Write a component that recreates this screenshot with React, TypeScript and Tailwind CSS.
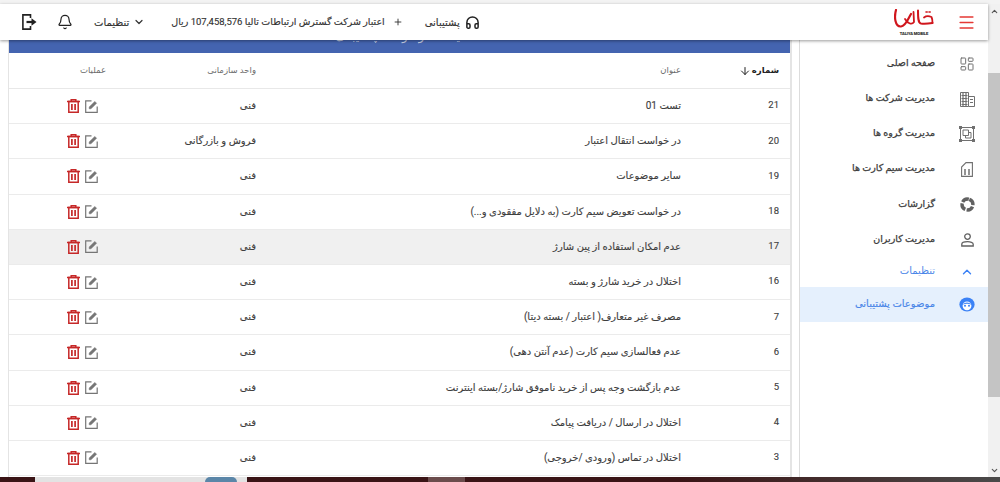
import React from "react";
import { ArrowDown, ChevronDown, ChevronUp, Plus, Bell, Headphones, Menu, LayoutDashboard } from "lucide-react";

const rows: [string, string, string, boolean?][] = [
  ["21", "تست 01", "فنی"],
  ["20", "در خواست انتقال اعتبار", "فروش و بازرگانی"],
  ["19", "سایر موضوعات", "فنی"],
  ["18", "در خواست تعویض سیم کارت (به دلایل مفقودی و...)", "فنی"],
  ["17", "عدم امکان استفاده از پین شارژ", "فنی", true],
  ["16", "اختلال در خرید شارژ و بسته", "فنی"],
  ["7", "مصرف غیر متعارف( اعتبار / بسته دیتا)", "فنی"],
  ["6", "عدم فعالسازی سیم کارت (عدم آنتن دهی)", "فنی"],
  ["5", "عدم بازگشت وجه پس از خرید ناموفق شارژ/بسته اینترنت", "فنی"],
  ["4", "اختلال در ارسال / دریافت پیامک", "فنی"],
  ["3", "اختلال در تماس (ورودی /خروجی)", "فنی"],
];

const Trash = () => (
  <svg width="13" height="14" viewBox="0 0 13 14" fill="none" stroke="#c62828" strokeWidth="1.5">
    <path d="M0 2.5h13" />
    <path d="M4.2 2.4V0.8h4.6v1.6" />
    <path d="M1.8 2.6h9.4V13.2H1.8z" />
    <path d="M4.9 5v6M8.1 5v6" strokeWidth="1.7" />
  </svg>
);

const Edit = () => (
  <svg width="13" height="13" viewBox="0 0 13 13" fill="none" stroke="#757575" strokeWidth="1.2">
    <path d="M6.5 0.8H0.7v11.5h11.5V6.5" />
    <path d="M4.2 8.8V7L9.8 1.4l1.8 1.8L6 8.8z" fill="#757575" strokeWidth="0.5" />
  </svg>
);

const Building = () => (
  <svg width="15" height="15" viewBox="0 0 15 15" fill="none" stroke="#707070">
    <path d="M0.5 14.5V0.5h8v14zM8.5 4.5h6v10h-6" />
    <path d="M1.5 3.5h6M1.5 6.5h6M1.5 9.5h6M1.5 12.5h6M3 1v13M6 1v13M10 7.5h3M10 10.5h3" strokeWidth="1.2" />
  </svg>
);

const Group = () => (
  <svg width="16" height="16" viewBox="0 0 16 16" fill="none" stroke="#707070" strokeWidth="1">
    <path d="M1.5 1.5h13v13h-13z" />
    <path d="M4 4h5.5v5.5H4zM6.5 9.5V12H12V6.5H9.5" />
    <path d="M0 0h3v3H0zM13 0h3v3h-3zM0 13h3v3H0zM13 13h3v3h-3z" fill="#707070" stroke="none" />
  </svg>
);

const Sim = () => (
  <svg width="12" height="15" viewBox="0 0 12 15" fill="none" stroke="#707070" strokeWidth="1.1">
    <path d="M5 0.6h6.4v13.8H0.6V5z" />
    <path d="M3 8h2M7 8h2M3 10h2M7 10h2M3 12h2M7 12h2" strokeWidth="1.3" />
  </svg>
);

const Donut = () => (
  <svg width="15" height="15" viewBox="0 0 15 15" fill="none" stroke="#616161" strokeWidth="3.4">
    <circle cx="7.5" cy="7.5" r="5.4" strokeDasharray="7 1.48" transform="rotate(-70 7.5 7.5)" />
  </svg>
);

const Person = () => (
  <svg width="13" height="14" viewBox="0 0 13 14" fill="none" stroke="#616161" strokeWidth="1.3">
    <circle cx="6.5" cy="3.6" r="2.8" />
    <path d="M0.8 13V11.2C0.8 9.5 3.5 8.7 6.5 8.7S12.2 9.5 12.2 11.2V13z" />
  </svg>
);

const Face = () => (
  <svg width="16" height="15" viewBox="0 0 16 15">
    <ellipse cx="8" cy="7.5" rx="7.6" ry="7" fill="#3b82f6" />
    <circle cx="8" cy="8.8" r="4.4" fill="#fff" />
    <path d="M3.4 7.8Q8 3 12.6 7.8Q8 5.8 3.4 7.8z" fill="#3b82f6" />
    <circle cx="6" cy="8.8" r="1" fill="#3b82f6" />
    <circle cx="10" cy="8.8" r="1" fill="#3b82f6" />
  </svg>
);

const Logout = () => (
  <svg width="15" height="16" viewBox="0 0 15 16" fill="none" stroke="#212121" strokeWidth="1.6">
    <path d="M8.5 4V0.9H0.9v14.2h7.6V12" />
    <path d="M4.5 8h6" strokeWidth="2.2" />
    <path d="M9.5 4.2L14.5 8 9.5 11.8z" fill="#212121" stroke="none" />
  </svg>
);

const Logo = () => (
  <svg width="40" height="20" viewBox="0 0 40 20" fill="none" stroke="#d0161d" strokeLinecap="round" strokeLinejoin="round">
    <path d="M2 1C0 8 1 18 7 17.5C12 17 14 10 17 5" strokeWidth="2.2" />
    <path d="M11 10C14 15 18 16 20 13L19.5 3" strokeWidth="1.8" />
    <path d="M24 1.5C24 8 24 14 27 14.5C31 15 35 14.5 38.5 14" strokeWidth="2" />
    <path d="M30 8.5C32 7 35 7 37.5 8C38.5 10 38.5 12 38.5 14" strokeWidth="1.8" />
    <path d="M32 3h1.2M35 3h1.2" strokeWidth="1.6" />
  </svg>
);

const navItems: [string, React.ReactNode][] = [
  ["صفحه اصلی", <LayoutDashboard key="a" size={18} strokeWidth={1.5} color="#707070" />],
  ["مدیریت شرکت ها", <Building key="b" />],
  ["مدیریت گروه ها", <Group key="c" />],
  ["مدیریت سیم کارت ها", <Sim key="d" />],
  ["گزارشات", <Donut key="e" />],
  ["مدیریت کاربران", <Person key="f" />],
];

export default function App() {
  return (
    <div dir="rtl" className="w-[1000px] h-[482px] overflow-hidden flex flex-col bg-white text-[#424242] font-['Roboto','DejaVu_Sans',sans-serif]">
      <div className="h-[4px] bg-[#f3f3f3] shrink-0" />
      <div className="flex-1 min-h-0 flex">
        {/* browser scrollbar */}
        <div className="w-[12px] shrink-0 bg-[#f1f1f1] flex flex-col items-center">
          <ChevronUp size={9} strokeWidth={3} color="#555" className="mt-[3px] mb-[57px]" />
          <div className="w-full h-[324px] bg-[#c4c4c4]" />
          <div className="flex-1" />
          <ChevronDown size={9} strokeWidth={3} color="#555" className="mb-[2px]" />
        </div>

        <div className="flex-1 min-w-0 flex flex-col">
          {/* header */}
          <header className="h-[36px] shrink-0 relative z-10 bg-white shadow-[0_1px_3px_rgba(0,0,0,0.4)] flex items-center pr-[12px] pl-[22px] [-webkit-text-stroke:0.15px]">
            <Menu size={19} strokeWidth={2} color="#e53935" />
            <div className="mr-[23px] w-[40px] flex flex-col items-center">
              <Logo />
              <span className="text-[4px] leading-[5px] font-bold text-[#333] whitespace-nowrap mt-[2px]" dir="ltr">TALIYA MOBILE</span>
            </div>
            <div className="flex-1" />
            <Headphones size={15} strokeWidth={2.4} color="#212121" />
            <span className="mr-[5px] text-[10px] text-[#333]">پشتیبانی</span>
            <Plus size={10} strokeWidth={2.2} color="#333" className="mr-[22px]" />
            <span className="mr-[8px] text-[9.5px] text-[#333] whitespace-nowrap">اعتبار شرکت گسترش ارتباطات تالیا 107,458,576 ریال</span>
            <ChevronDown size={12} strokeWidth={2.4} color="#333" className="mr-[26px]" />
            <span className="mr-[4px] text-[10px] text-[#333]">تنظیمات</span>
            <Bell size={16} strokeWidth={1.8} color="#212121" className="mr-[21px]" />
            <div className="mr-[20px]"><Logout /></div>
          </header>

          <div className="flex-1 min-h-0 flex">
            {/* sidebar */}
            <aside className="w-[189px] shrink-0 border-l border-[#dcdcdc] pt-[6.4px]">
              {navItems.map(([label, icon]) => (
                <div key={label} className="h-[35.2px] flex items-center pr-[13px]">
                  <span className="w-[16px] flex justify-center">{icon}</span>
                  <span className="mr-[24px] mb-[2px] text-[9.5px] [-webkit-text-stroke:0.25px] text-[#3a3a3a] whitespace-nowrap">{label}</span>
                </div>
              ))}
              <div className="h-[29.4px] flex items-center pr-[13px]">
                <span className="w-[16px] flex justify-center"><ChevronUp size={14} strokeWidth={2.4} color="#3b82f6" /></span>
                <span className="mr-[24px] mb-[3px] text-[10px] text-[#4a86e8]">تنظیمات</span>
              </div>
              <div className="h-[35.2px] bg-[#e5f0fd] flex items-center pr-[13px]">
                <span className="w-[16px] flex justify-center"><Face /></span>
                <span className="mr-[24px] mb-[3px] text-[10px] [-webkit-text-stroke:0.15px] text-[#4a86e8] whitespace-nowrap">موضوعات پشتیبانی</span>
              </div>
            </aside>

            {/* content */}
            <main className="flex-1 min-w-0 pr-[7px] pl-[8px]">
              <div className="h-full flex flex-col border-l border-r-2 border-[#e4e4e4]">
                <div className="h-[27px] -mt-[14px] pt-[2px] shrink-0 bg-[#4464b0] flex justify-center">
                  <span className="text-[12px] leading-[16px] text-white/70">لیست موضوعات پشتیبانی</span>
                </div>
                <div className="h-[36px] shrink-0 flex items-center border-b border-[#e8e8e8] text-[#6b6b6b] text-[8.5px]">
                  <div className="w-[109px] pr-[11px] flex items-center gap-[1px] font-bold text-[#212121]">
                    <span>شماره</span>
                    <ArrowDown size={12} strokeWidth={2} color="#212121" />
                  </div>
                  <div className="w-[425px]">عنوان</div>
                  <div className="w-[150px]">واحد سازمانی</div>
                  <div className="flex-1">عملیات</div>
                </div>
                {rows.map(([n, t, u, hl]) => (
                  <div key={n} className={`h-[35.2px] shrink-0 flex items-center border-b border-[#ebebeb] text-[#3d3d3d] text-[10px] [-webkit-text-stroke:0.12px] ${hl ? "bg-[#f0f0f0]" : ""}`}>
                    <div className="w-[109px] pr-[11px] pb-[1px] text-[9.5px]">{n}</div>
                    <div className="w-[425px] pb-[1px] whitespace-nowrap">{t}</div>
                    <div className="w-[150px] pb-[1px] whitespace-nowrap">{u}</div>
                    <div className="flex-1 pr-[8px] flex items-center gap-[5px]">
                      <Edit />
                      <Trash />
                    </div>
                  </div>
                ))}
              </div>
            </main>
          </div>
        </div>
      </div>
      <div className="h-[5px] shrink-0 flex" dir="ltr">
        <div className="w-[35px] bg-[#3a1416]" />
        <div className="w-[212px] bg-[#e3e3e3] flex justify-end pr-[10px]">
          <div className="w-[32px] h-[5px] rounded-t-full bg-[#5b86a8]" />
        </div>
        <div className="w-[181px] bg-[#3a1416]" />
        <div className="w-[37px] bg-[#6b4c4c]" />
        <div className="w-[215px] bg-[#3a1416]" />
        <div className="flex-1 bg-linear-to-r from-[#3a1416] to-[#4a4a4a]" />
      </div>
    </div>
  );
}
